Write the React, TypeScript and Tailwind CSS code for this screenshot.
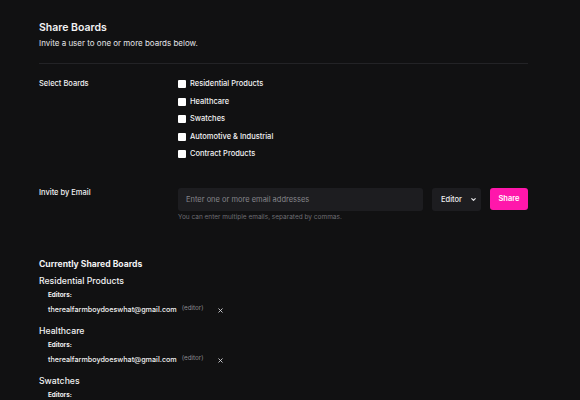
import React from 'react';

const BOARDS = ['Residential Products', 'Healthcare', 'Swatches', 'Automotive & Industrial', 'Contract Products'];

const SHARED = [
  { board: 'Residential Products', editors: ['therealfarmboydoeswhat@gmail.com'] },
  { board: 'Healthcare', editors: ['therealfarmboydoeswhat@gmail.com'] },
  { board: 'Swatches', editors: ['therealfarmboydoeswhat@gmail.com'] },
];

const App: React.FC = () => {
  return (
    <div className="h-[400px] w-full bg-[#111112] text-[#f2f2f3] font-['Inter','Noto_Sans',sans-serif] overflow-hidden">
      <div className="px-[39px] pt-[21px] w-[529px]">
        {/* ===== HEADER ===== */}
        <h2 className="text-[10.5px] leading-[14px] font-semibold">Share Boards</h2>
        <p className="mt-[2px] text-[8px] leading-[12px] text-[#e4e4e7]">Invite a user to one or more boards below.</p>
        <div className="mt-[14px] h-px w-[489px] bg-[#232326]" />

        {/* ===== SELECT BOARDS ===== */}
        <div className="mt-[15px] flex">
          <div className="w-[139px] shrink-0 text-[7.5px] leading-[10px] font-medium">Select Boards</div>
          <div className="flex flex-col gap-[7.5px]">
            {BOARDS.map(b => (
              <label key={b} className="flex items-center h-[10px] gap-[4px]">
                <span className="w-[8px] h-[8px] bg-white rounded-[1px]" />
                <span className="text-[7.5px] leading-[10px] font-medium">{b}</span>
              </label>
            ))}
          </div>
        </div>

        {/* ===== INVITE ===== */}
        <div className="mt-[29px] flex">
          <div className="w-[139px] shrink-0 text-[7.5px] leading-[10px] font-medium">Invite by Email</div>
          <div className="flex flex-col">
            <div className="flex items-start">
              <div className="w-[245px] h-[23px] rounded-[3px] bg-[#1d1d20] flex items-center pl-[8px] text-[7.5px] text-[#85858b]">
                Enter one or more email addresses
              </div>
              <div className="ml-[9px] w-[49px] h-[23px] rounded-[3px] bg-[#1d1d20] flex items-center justify-between pl-[9px] pr-[4px] text-[7.5px] font-medium text-[#ececee]">
                Editor
                <svg width="7" height="7" viewBox="0 0 24 24" fill="none" stroke="#e5e5e7" strokeWidth="4" strokeLinecap="round" strokeLinejoin="round">
                  <path d="m6 9 6 6 6-6" />
                </svg>
              </div>
              <button className="ml-[9px] w-[38px] h-[22px] rounded-[3px] bg-[#ff17ab] text-white text-[7.5px] font-semibold">
                Share
              </button>
            </div>
            <p className="mt-[2px] text-[6.5px] leading-[9px] text-[#6e6e74]">You can enter multiple emails, separated by commas.</p>
          </div>
        </div>

        {/* ===== CURRENTLY SHARED ===== */}
        <h3 className="mt-[36px] text-[8.6px] leading-[12px] font-bold">Currently Shared Boards</h3>
        <div className="mt-[5px]">
          {SHARED.map(s => (
            <div key={s.board} className="h-[50px]">
              <div className="text-[8.7px] leading-[12px] font-medium">{s.board}</div>
              <div className="pl-[9px]">
                <div className="mt-[3px] text-[6.3px] leading-[10px] font-bold">Editors:</div>
                {s.editors.map(e => (
                  <div key={e} className="mt-[4px] flex items-center h-[12px]">
                    <span className="text-[7.2px] font-medium">{e}</span>
                    <span className="ml-[5px] -mt-[3px] text-[6.3px] text-[#8b8b91]">(editor)</span>
                    <svg className="ml-[13px]" width="7" height="7" viewBox="0 0 24 24" fill="none" stroke="#d8d8db" strokeWidth="3" strokeLinecap="round">
                      <path d="M18 6 6 18M6 6l12 12" />
                    </svg>
                  </div>
                ))}
              </div>
            </div>
          ))}
        </div>
      </div>
    </div>
  );
};

export default App;
